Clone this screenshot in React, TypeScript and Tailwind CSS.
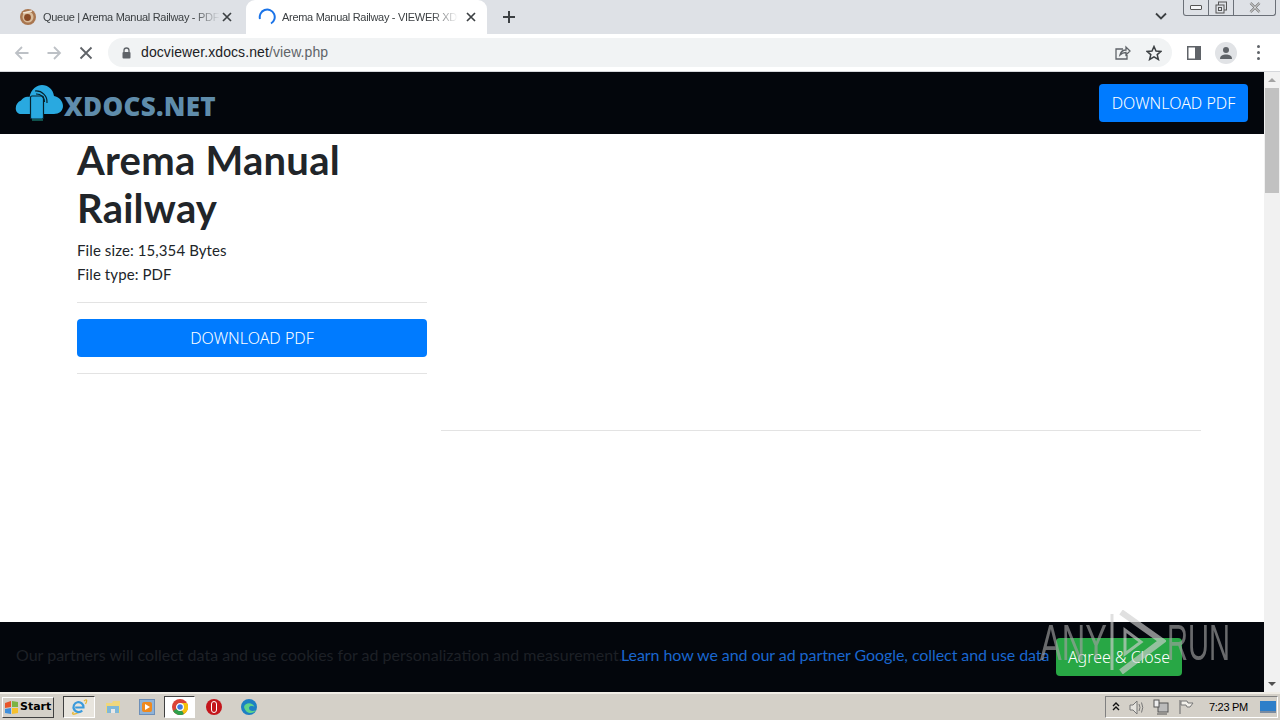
import React from "react";

const ui = { fontFamily: '"Liberation Sans", Arial, sans-serif' };
const page = { fontFamily: 'Lato, "Noto Sans", sans-serif' };
const btn = { fontFamily: '"Noto Sans", sans-serif' };

function Cloud() {
  return (
    <svg width="50" height="38" viewBox="0 0 50 38" className="shrink-0">
      <path d="M6 30 C-1 30 -1 19 6 16.5 C8 13 12 12 14.5 13 C16 5 22 1 27 1 C33 1 38 5 39 12 C44 13 48 17 48 22 C48 27 44 30 39 30 Z" fill="#29a9e0" />
      <rect x="15.5" y="12" width="13" height="23" rx="1.5" fill="#29a9e0" stroke="#06222c" strokeWidth="1.2" />
      <path d="M17 36 H28" stroke="#1d9b8c" strokeWidth="1" />
      <path d="M20 7 A11 11 0 0 1 32 19" fill="none" stroke="#06222c" strokeWidth="1.2" />
      <path d="M21 10 A8 8 0 0 1 29.5 18" fill="none" stroke="#06222c" strokeWidth="1.2" />
    </svg>
  );
}

function CloseX({ c = "#3c4043" }: { c?: string }) {
  return (
    <svg width="10" height="10" viewBox="0 0 10 10">
      <path d="M1 1 L9 9 M9 1 L1 9" stroke={c} strokeWidth="1.7" />
    </svg>
  );
}

function Tabs() {
  return (
    <div className="h-[34px] bg-[#dee1e6] flex items-stretch relative" style={ui}>
      <div className="w-[246px] flex items-center pl-[20px] pr-[14px]">
        <svg width="16" height="16" viewBox="0 0 16 16" className="shrink-0">
          <circle cx="8" cy="8" r="8" fill="#a9764f" />
          <circle cx="8" cy="8" r="5.5" fill="#d9bd9c" />
          <circle cx="7.5" cy="8.5" r="3.4" fill="#8a4a25" />
          <path d="M3 4 L12 2" stroke="#f0e4d4" strokeWidth="1.4" />
        </svg>
        <span className="ml-[7px] w-[177px] text-[11px] text-[#3c4043] whitespace-nowrap overflow-hidden tracking-[-0.3px] [mask-image:linear-gradient(to_right,black_85%,transparent)]">Queue | Arema Manual Railway - PDF</span>
        <span className="ml-auto flex"><CloseX /></span>
      </div>
      <div className="w-[241px] bg-white rounded-t-[9px] flex items-center pl-[12px] pr-[11px]">
        <svg width="18" height="18" viewBox="0 0 18 18" className="shrink-0">
          <path d="M2 11 A7.5 7.5 0 1 1 13 15.5" fill="none" stroke="#1a73e8" strokeWidth="2" />
        </svg>
        <span className="ml-[6px] w-[176px] text-[11px] text-[#3c4043] whitespace-nowrap overflow-hidden tracking-[-0.3px] [mask-image:linear-gradient(to_right,black_85%,transparent)]">Arema Manual Railway - VIEWER XDOCS</span>
        <span className="ml-auto flex"><CloseX /></span>
      </div>
      <div className="w-[44px] flex items-center justify-center">
        <svg width="14" height="14" viewBox="0 0 14 14"><path d="M7 1 V13 M1 7 H13" stroke="#3c4043" strokeWidth="2" /></svg>
      </div>
      <div className="flex-1 flex justify-end pt-[10px] pr-[113px]">
        <svg width="12" height="12" viewBox="0 0 12 12"><path d="M1 3.5 L6 8.5 L11 3.5" fill="none" stroke="#3c4043" strokeWidth="1.8" /></svg>
      </div>
      <div className="absolute top-0 right-[4px] w-[93px] h-[16px] border border-t-0 border-[#6b7078] rounded-b-[3px] flex bg-[#dee1e6]">
        <div className="w-[25px] flex items-center justify-center border-r border-[#6b7078]"><div className="w-[12px] h-[5px] bg-white/70 border border-[#555] rounded-[1px]" /></div>
        <div className="w-[25px] flex items-center justify-center border-r border-[#6b7078]">
          <svg width="13" height="13" viewBox="0 0 13 13"><rect x="3.5" y="1" width="8" height="8" fill="none" stroke="#555" /><rect x="1" y="4" width="8" height="8" fill="#dee1e6" stroke="#555" /><rect x="3.5" y="6.5" width="3" height="3" fill="none" stroke="#555" /></svg>
        </div>
        <div className="flex-1 flex items-center justify-center">
          <svg width="12" height="11" viewBox="0 0 12 11"><path d="M1.5 1 L10.5 10 M10.5 1 L1.5 10" stroke="#666" strokeWidth="2.4" /><path d="M1.5 1 L10.5 10 M10.5 1 L1.5 10" stroke="#fff" strokeWidth="1" /></svg>
        </div>
      </div>
    </div>
  );
}

function Toolbar() {
  return (
    <div className="h-[38px] bg-white flex items-center border-b border-[#d5d7db]" style={ui}>
      <div className="w-[108px] flex items-center pl-[14px] gap-[16px] shrink-0">
        <svg width="16" height="16" viewBox="0 0 16 16"><path d="M14.5 8 H2 M8 2 L2 8 L8 14" fill="none" stroke="#bdc1c6" strokeWidth="1.8" /></svg>
        <svg width="16" height="16" viewBox="0 0 16 16"><path d="M1.5 8 H14 M8 2 L14 8 L8 14" fill="none" stroke="#bdc1c6" strokeWidth="1.8" /></svg>
        <span className="ml-[1px] flex"><svg width="14" height="14" viewBox="0 0 14 14"><path d="M1.5 1.5 L12.5 12.5 M12.5 1.5 L1.5 12.5" stroke="#5f6368" strokeWidth="1.8" /></svg></span>
      </div>
      <div className="w-[1064px] h-[29px] bg-[#f1f3f4] rounded-full flex items-center pl-[13px] pr-[10px] shrink-0">
        <svg width="11" height="12" viewBox="0 0 11 12" className="shrink-0"><path d="M3 5 V3.5 A2.5 2.5 0 0 1 8 3.5 V5" fill="none" stroke="#5f6368" strokeWidth="1.3" /><rect x="1.5" y="5" width="8" height="6.5" rx="1" fill="#5f6368" /></svg>
        <span className="ml-[9px] text-[14px] text-[#202124] tracking-[0.1px]">docviewer.xdocs.net<span className="text-[#5f6368]">/view.php</span></span>
        <div className="ml-auto flex items-center gap-[15px]">
          <svg width="17" height="16" viewBox="0 0 17 16"><path d="M9 4 H2 V14 H13 V10 M6 10 C7 6 10 5 12 5 V2 L16 6 L12 10 V7.5 C10 7.5 8 8 6 10 Z" fill="none" stroke="#5f6368" strokeWidth="1.3" /></svg>
          <svg width="16" height="16" viewBox="0 0 16 16"><path d="M8 1.5 L10 6 L15 6.4 L11.2 9.6 L12.4 14.5 L8 11.8 L3.6 14.5 L4.8 9.6 L1 6.4 L6 6 Z" fill="none" stroke="#3c4043" strokeWidth="1.5" /></svg>
        </div>
      </div>
      <div className="flex-1 flex items-center pl-[15px]">
        <svg width="14" height="14" viewBox="0 0 14 14" className="shrink-0"><rect x="0.75" y="0.75" width="12.5" height="12.5" fill="#fff" stroke="#5f6368" strokeWidth="1.5" /><rect x="8" y="1" width="5" height="12" fill="#5f6368" /></svg>
        <div className="ml-[14px] w-[22px] h-[22px] rounded-full bg-[#e1e3e6] flex items-center justify-center shrink-0">
          <svg width="14" height="14" viewBox="0 0 14 14"><circle cx="7" cy="4" r="3" fill="#5f6368" /><path d="M1 13 C1 9.5 4 8.5 7 8.5 C10 8.5 13 9.5 13 13 Z" fill="#5f6368" /></svg>
        </div>
        <div className="ml-[20px] flex flex-col gap-[3px]">
          <span className="w-[3px] h-[3px] rounded-full bg-[#5f6368]" />
          <span className="w-[3px] h-[3px] rounded-full bg-[#5f6368]" />
          <span className="w-[3px] h-[3px] rounded-full bg-[#5f6368]" />
        </div>
      </div>
    </div>
  );
}

function Scrollbar() {
  return (
    <div className="w-[16px] bg-[#f1f1f1] flex flex-col items-center shrink-0">
      <div className="h-[16px] flex items-center justify-center"><div className="w-0 h-0 border-x-[4px] border-x-transparent border-b-[4px] border-b-[#a3a3a3]" /></div>
      <div className="w-[14px] h-[105px] bg-[#c1c1c1]" />
      <div className="flex-1" />
      <div className="h-[16px] flex items-center justify-center"><div className="w-0 h-0 border-x-[4px] border-x-transparent border-t-[4px] border-t-[#505050]" /></div>
    </div>
  );
}

function Watermark() {
  return (
    <div className="absolute left-[1040px] top-[538px] w-[192px] h-[64px] pointer-events-none opacity-65" style={ui}>
      <span className="absolute left-0 top-[8px] text-[50px] leading-[50px] text-[#a0a0a0] scale-x-[0.65] origin-left whitespace-nowrap">ANY</span>
      <svg width="58" height="64" viewBox="0 0 58 64" className="absolute left-[68px] top-0">
        <path d="M4 4 V60" stroke="#d0d0d0" strokeWidth="3" fill="none" />
        <path d="M13 2 L54 31 L13 62" fill="none" stroke="#d0d0d0" strokeWidth="6" />
        <path d="M17 20 L33 32 L17 44 Z" fill="none" stroke="#d0d0d0" strokeWidth="3" />
      </svg>
      <span className="absolute left-[127px] top-[8px] text-[50px] leading-[50px] text-[#a0a0a0] scale-x-[0.58] origin-left whitespace-nowrap">RUN</span>
    </div>
  );
}

function Main() {
  return (
    <div className="h-[620px] flex relative overflow-hidden" style={page}>
      <div className="flex-1 flex flex-col min-w-0">
        <div className="h-[62px] bg-[#03060c] flex items-center justify-between pl-[15px] pr-[16px] shrink-0">
          <div className="flex items-center">
            <Cloud />
            <span className="ml-[-1px] mt-[7px] text-[26px] font-extrabold text-[#5f8cab] tracking-[0.3px]" style={{ fontFamily: '"Open Sans", sans-serif' }}>XDOCS.NET</span>
          </div>
          <button className="h-[38px] w-[149px] bg-[#007bff] rounded-[4px] text-white text-[16px] font-light" style={btn}>DOWNLOAD PDF</button>
        </div>
        <div className="flex-1 flex pl-[77px] pr-[63px] bg-white text-[#212529]">
          <div className="w-[350px] shrink-0">
            <h1 className="text-[40px] leading-[48px] font-bold mt-[2px] tracking-[0.25px] text-[#212529]">Arema Manual Railway</h1>
            <p className="text-[15px] leading-[24px] mt-[6px] tracking-[0.1px]">File size: 15,354 Bytes</p>
            <p className="text-[15px] leading-[24px] tracking-[0.1px]">File type: PDF</p>
            <div className="h-px bg-[#e3e3e3] mt-[16px]" />
            <button className="mt-[16px] w-full h-[38px] bg-[#007bff] rounded-[4px] text-white text-[16px] font-light" style={btn}>DOWNLOAD PDF</button>
            <div className="h-px bg-[#e3e3e3] mt-[16px]" />
          </div>
          <div className="flex-1 ml-[14px]">
            <div className="h-px bg-[#e3e3e3] mt-[296px]" />
          </div>
        </div>
        <div className="h-[70px] bg-[#03060c] flex items-center pl-[16px] shrink-0">
          <span className="w-[605px] pb-[4px] text-[16px] text-[#1d2026] whitespace-nowrap">Our partners will collect data and use cookies for ad personalization and measurement.</span>
          <span className="w-[435px] pb-[4px] text-[16px] tracking-[-0.07px] text-[#1a67cf] whitespace-nowrap">Learn how we and our ad partner Google, collect and use data</span>
          <button className="w-[126px] h-[38px] bg-[#28a745] rounded-[4px] text-white text-[16px] font-light shrink-0" style={btn}>Agree &amp; Close</button>
        </div>
      </div>
      <Scrollbar />
      <Watermark />
    </div>
  );
}

function Taskbar() {
  return (
    <div className="h-[28px] bg-[#d4d0c8] border-t-2 border-t-[#f0ede6] flex items-center pl-[2px]" style={{ fontFamily: '"DejaVu Sans", sans-serif' }}>
      <div className="w-[52px] h-[21px] border border-[#fff] border-r-[#404040] border-b-[#404040] flex items-center pl-[1px] shrink-0">
        <svg width="15" height="15" viewBox="0 0 15 15"><path d="M1 3 L7 1 L7 7 L1 8 Z" fill="#e8562a" /><path d="M8 1 L14 2 L14 7 L8 7 Z" fill="#7cb342" /><path d="M1 9 L7 8 L7 14 L1 13 Z" fill="#3f8fdc" /><path d="M8 8 L14 8 L14 13 L8 14 Z" fill="#f6c02c" /></svg>
        <span className="text-[11px] font-bold ml-[1px] text-black">Start</span>
      </div>
      <div className="ml-[9px] w-[32px] h-[22px] border border-[#404040] border-r-white border-b-white bg-[#e8e5de] flex items-center justify-center shrink-0">
        <svg width="18" height="18" viewBox="0 0 18 18">
          <path d="M3.5 14 C0.5 17 5 17 9 14 M14 3 C16 1 18 1.5 15.5 6" fill="none" stroke="#e8b93a" strokeWidth="1.3" />
          <path d="M5.2 9.5 H13.5 A5 5 0 1 0 12.2 12.5" fill="none" stroke="#3b9bdc" strokeWidth="2.2" />
        </svg>
      </div>
      <div className="ml-[10px] w-[16px] h-[16px] flex items-end shrink-0">
        <svg width="16" height="16" viewBox="0 0 16 16"><path d="M1 4 H7 L8 2 H15 V14 H1 Z" fill="#f0d77c" /><rect x="2" y="7" width="12" height="7" fill="#7fb8d8" /><rect x="6" y="10" width="4" height="4" fill="#e8e8e8" /></svg>
      </div>
      <div className="ml-[18px] w-[16px] h-[16px] bg-[#8fb3d8] border border-[#6d8fb8] flex items-center justify-center shrink-0">
        <div className="w-[10px] h-[10px] bg-[#ef8a1f] rounded-[2px] flex items-center justify-center">
          <div className="w-0 h-0 border-y-[3px] border-y-transparent border-l-[5px] border-l-white" />
        </div>
      </div>
      <div className="ml-[9px] w-[31px] h-[22px] bg-white border border-[#404040] border-r-white border-b-white flex items-center justify-center shrink-0">
        <svg width="16" height="16" viewBox="0 0 16 16">
          <circle cx="8" cy="8" r="8" fill="#db4437" />
          <path d="M8 8 L1 12 A8 8 0 0 0 12 15 Z" fill="#2fa04a" />
          <path d="M8 8 L12 15 A8 8 0 0 0 15 4 L8 4 Z" fill="#f4c20d" />
          <circle cx="8" cy="8" r="3.4" fill="#3f78e0" stroke="#fff" strokeWidth="1.2" />
        </svg>
      </div>
      <div className="ml-[11px] w-[16px] h-[16px] rounded-full bg-[#c4161c] flex items-center justify-center shrink-0">
        <div className="w-[6px] h-[12px] rounded-full border-[1.5px] border-white" />
      </div>
      <div className="ml-[19px] shrink-0">
        <svg width="16" height="16" viewBox="0 0 16 16">
          <circle cx="8" cy="8" r="8" fill="#1d7fc4" />
          <path d="M3 8 C4 3 12 3 13.5 8 C12 6.5 8 6.5 8 9 C8 12 12 13 15 11 C13 15 5 16 3 8 Z" fill="#5fd38a" />
        </svg>
      </div>
      <div className="ml-auto mr-[2px] w-[173px] h-[22px] border border-[#808080] border-r-white border-b-white flex items-center pl-[6px] shrink-0">
        <svg width="8" height="10" viewBox="0 0 8 10"><path d="M1 4 L4 1 L7 4 M1 8 L4 5 L7 8" fill="none" stroke="#111" strokeWidth="1.4" /></svg>
        <svg width="16" height="15" viewBox="0 0 16 15" className="ml-[9px]"><path d="M1 5 H4 L8 1 V14 L4 10 H1 Z" fill="#e5e3de" stroke="#777" /><path d="M10 4 Q12 7.5 10 11 M12.5 2.5 Q15 7.5 12.5 12.5" fill="none" stroke="#777" /></svg>
        <svg width="16" height="16" viewBox="0 0 16 16" className="ml-[8px]"><rect x="5" y="4" width="10" height="9" fill="#bbb" stroke="#555" /><rect x="1" y="1" width="5" height="7" fill="#eee" stroke="#555" /><path d="M4 15 H14" stroke="#555" /></svg>
        <svg width="16" height="16" viewBox="0 0 16 16" className="ml-[9px]"><path d="M2 1 V15" stroke="#777" strokeWidth="1.2" /><path d="M3 2 H9 L10 4 H15 L12 8 H9 L8 6 H3 Z" fill="#f2f0ea" stroke="#777" /></svg>
        <span className="ml-[15px] text-[11px] text-black whitespace-nowrap tracking-[-0.3px]" style={ui}>7:23 PM</span>
        <svg width="16" height="14" viewBox="0 0 16 14" className="ml-[12px]"><rect width="16" height="10" y="1" fill="#2e7fc9" /><rect y="11" width="16" height="2" fill="#7a8ba0" /></svg>
      </div>
    </div>
  );
}

export default function App() {
  return (
    <div className="w-[1280px] h-[720px] overflow-hidden flex flex-col bg-white">
      <Tabs />
      <Toolbar />
      <Main />
      <Taskbar />
    </div>
  );
}
